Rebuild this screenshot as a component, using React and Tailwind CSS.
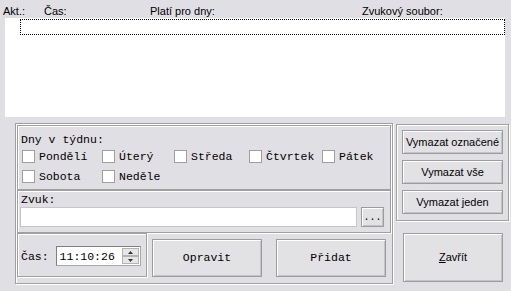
import React from 'react';

const sans = { fontFamily: '"Liberation Sans", Arial, sans-serif' };
const mono = { fontFamily: '"Liberation Mono", "Courier New", monospace' };

const etched = 'border border-[#a0a0a0] shadow-[inset_1px_1px_0_#fff,1px_1px_0_#fff]';
const btn =
  'flex items-center justify-center border border-[#9c9c9c] bg-[#e2e2e4] shadow-[inset_1px_1px_0_#fff,inset_-1px_-1px_0_#c4c4c4] text-black';

const Day = ({ label, width }) => (
  <div className="flex items-center h-[13px]" style={{ width }}>
    <span className="w-[13px] h-[13px] bg-white border border-[#9f9f9f] shrink-0" />
    <span className="ml-[4px] text-[11.5px] leading-[13px] text-black" style={mono}>
      {label}
    </span>
  </div>
);

const App = () => {
  return (
    <div className="w-[511px] h-[291px] bg-[#e0dfe3] overflow-hidden flex flex-col" style={sans}>
      {/* header of the list */}
      <div className="h-[18px] flex pl-[3px] pt-[5px] text-[11px] leading-[13px] text-black">
        <span className="w-[41px]">Akt.:</span>
        <span className="w-[106px]">Čas:</span>
        <span className="w-[212px]">Platí pro dny:</span>
        <span>Zvukový soubor:</span>
      </div>

      {/* list */}
      <div className="ml-[5px] mr-[6px] h-[99px] bg-white pt-[1px]">
        <div className="ml-[15px] h-[16px] border border-dotted border-black" />
      </div>

      <div className="flex mt-[6px]">
        {/* left group */}
        <div className={`ml-[15px] w-[378px] h-[161px] p-[1px] ${etched}`}>
          <div className={`h-[65px] pl-[3px] pt-[7px] ${etched}`}>
            <div className="text-[11.5px] leading-[13px] text-black" style={mono}>Dny v týdnu:</div>
            <div className="flex mt-[4px] pl-[1px]">
              <Day label="Pondělí" width={80} />
              <Day label="Úterý" width={72} />
              <Day label="Středa" width={75} />
              <Day label="Čtvrtek" width={73} />
              <Day label="Pátek" width={60} />
            </div>
            <div className="flex mt-[7px] pl-[1px]">
              <Day label="Sobota" width={80} />
              <Day label="Neděle" width={72} />
            </div>
          </div>

          <div className={`h-[43px] pl-[3px] pt-[2px] ${etched}`}>
            <div className="text-[11.5px] leading-[13px] text-black" style={mono}>Zvuk:</div>
            <div className="flex mt-[1px] -ml-[1px]">
              <div className="w-[337px] h-[20px] bg-white border border-[#c6c6c6]" />
              <div className={`ml-[4px] w-[23px] h-[20px] text-[10px] ${btn}`} style={mono}>...</div>
            </div>
          </div>

          <div className="flex">
            <div className={`w-[130px] h-[44px] flex items-center pl-[3px] pt-[2px] ${etched}`}>
              <span className="text-[11.5px] leading-[13px] text-black" style={mono}>Čas:</span>
              <div className="ml-[7px] w-[85px] h-[20px] bg-white border border-[#a9a9a9] border-t-[#7f7f7f] border-l-[#7f7f7f] flex items-center pl-[3px] pr-[1px]">
                <span className="text-[11.5px] leading-[13px] text-black grow" style={mono}>11:10:26</span>
                <div className="w-[17px] h-[16px] flex flex-col">
                  <div className="h-[8px] bg-[#e6e6e6] border border-[#b3b3b3] flex items-center justify-center">
                    <svg width="5" height="3" viewBox="0 0 5 3"><path d="M2.5 0 L5 3 L0 3 Z" fill="#333" /></svg>
                  </div>
                  <div className="h-[8px] bg-[#e6e6e6] border border-[#b3b3b3] flex items-center justify-center">
                    <svg width="5" height="3" viewBox="0 0 5 3"><path d="M0 0 L5 0 L2.5 3 Z" fill="#333" /></svg>
                  </div>
                </div>
              </div>
            </div>
            <div className={`ml-[5px] mt-[6px] w-[110px] h-[38px] text-[11.5px] ${btn}`} style={mono}>Opravit</div>
            <div className={`ml-[14px] mt-[6px] w-[110px] h-[38px] text-[11.5px] ${btn}`} style={mono}>Přidat</div>
          </div>
        </div>

        {/* right column */}
        <div className="ml-[3px] w-[113px] flex flex-col">
          <div className={`mt-[1px] h-[97px] flex flex-col pl-[5px] pt-[5px] gap-[6px] ${etched}`}>
            <div className={`w-[101px] h-[24px] text-[11px] ${btn}`}>Vymazat označené</div>
            <div className={`w-[101px] h-[24px] text-[11px] ${btn}`}>Vymazat vše</div>
            <div className={`w-[101px] h-[24px] text-[11px] ${btn}`}>Vymazat jeden</div>
          </div>
          <div className={`mt-[12px] ml-[7px] w-[100px] h-[49px] text-[11px] ${btn}`}>
            <span className="underline">Z</span>avřít
          </div>
        </div>
      </div>
    </div>
  );
};

export default App;
